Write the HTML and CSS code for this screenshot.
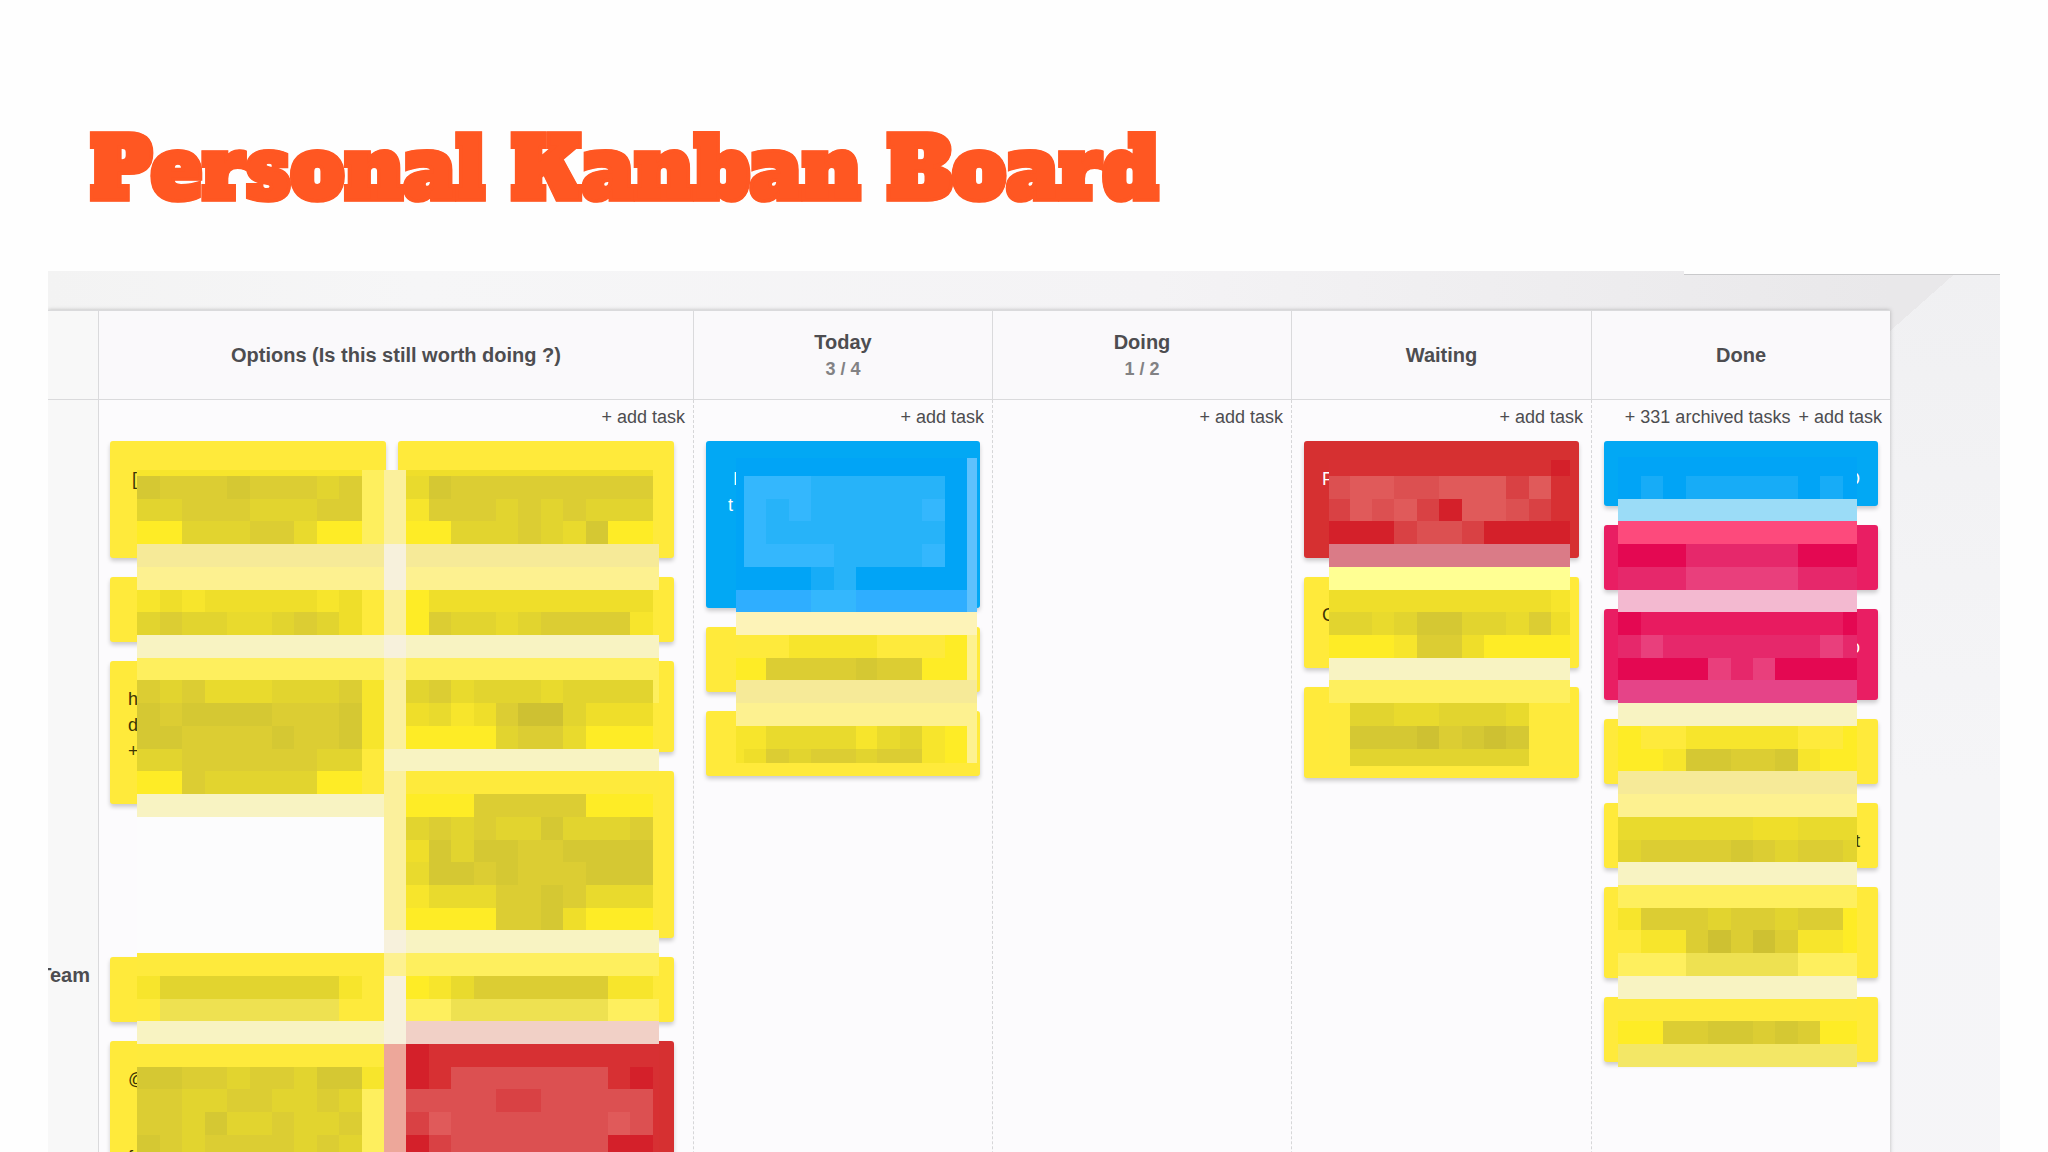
FILE: index.html
```html
<!DOCTYPE html>
<html lang="en">
<head>
<meta charset="utf-8">
<title>Personal Kanban Board</title>
<link rel="stylesheet" href="styles.css">
</head>
<body>
<div class="slide">
  <header class="slide-head"><h1>Personal Kanban Board</h1></header>
  <main class="panel">
    <div class="board">
      <div class="head lane-head"></div>
      <div class="head"><h2>Options (Is this still worth doing ?)</h2></div>
      <div class="head"><h2>Today</h2><p class="limit">3 / 4</p></div>
      <div class="head"><h2>Doing</h2><p class="limit">1 / 2</p></div>
      <div class="head"><h2>Waiting</h2></div>
      <div class="head"><h2>Done</h2></div>

      <div class="lane"><span>Team</span></div>

      <section class="column">
        <div class="actions"><button type="button">+ add task</button></div>
        <div class="stack pair">
          <article class="card lines-3 inset">[c</article>
          <article class="card lines-3"></article>
          <article class="card lines-1"></article>
          <article class="card lines-1"></article>
          <article class="card lines-4 tall">h<br>d<br>+</article>
          <article class="card lines-2"></article>
          <article class="card lines-5 end"><br><br>.</article>
          <article class="card lines-1"></article>
          <article class="card lines-1"></article>
          <article class="card lines-5">@<br><br><br>for</article>
          <article class="card lines-5 red"></article>
          <svg class="mosaic mosaic-options" data-map="options" aria-hidden="true"></svg>
        </div>
      </section>

      <section class="column">
        <div class="actions"><button type="button">+ add task</button></div>
        <div class="stack">
          <article class="card lines-5 blue inset">&nbsp;I<br>t</article>
          <article class="card lines-1"></article>
          <article class="card lines-1"></article>
          <svg class="mosaic mosaic-today" data-map="today" aria-hidden="true"></svg>
        </div>
      </section>

      <section class="column">
        <div class="actions"><button type="button">+ add task</button></div>
      </section>

      <section class="column">
        <div class="actions"><button type="button">+ add task</button></div>
        <div class="stack">
          <article class="card lines-3 red">F</article>
          <article class="card lines-2">C</article>
          <article class="card lines-2"></article>
          <svg class="mosaic mosaic-waiting" data-map="waiting" aria-hidden="true"></svg>
        </div>
      </section>

      <section class="column">
        <div class="actions"><button type="button">+ 331 archived tasks</button><button type="button">+ add task</button></div>
        <div class="stack">
          <article class="card lines-1 blue end">O</article>
          <article class="card lines-1 pink"></article>
          <article class="card lines-2 pink end">o</article>
          <article class="card lines-1"></article>
          <article class="card lines-1 end">t</article>
          <article class="card lines-2"></article>
          <article class="card lines-1"></article>
          <svg class="mosaic mosaic-done" data-map="done" aria-hidden="true"></svg>
        </div>
      </section>
    </div>
  </main>
</div>
<script src="mosaic.js"></script>
</body>
</html>
```
FILE: styles.css
```css
* { box-sizing: border-box; }

body {
  margin: 0;
  background: #fefefe;
  color: #4d4d50;
  font: 18px/26px "Helvetica Neue", "Liberation Sans", Arial, sans-serif;
}

h1, h2, p { margin: 0; }

.slide {
  height: 100vh;
  overflow: hidden;
}

.slide-head {
  height: 271px;
  padding: 114px 90px 0;
}

h1 {
  color: #ff5722;
  -webkit-text-stroke: 1px #ff5722;
  font: bold 85px/112px "Alfa Slab One", "DejaVu Serif Condensed", "DejaVu Serif", serif;
  white-space: nowrap;
}

.panel {
  position: relative;
  margin: 0 48px;
  padding: 39px 110px 0 0;
  overflow: hidden;
  background:
    linear-gradient(to bottom right, #e9e8ea 50%, transparent 50%) right 42px top 0 / 68px 60px no-repeat,
    linear-gradient(to right, #f3f3f3, #f6f6f7 20%, #f4f3f5 60%, #e9e8ea) left top / calc(100% - 110px) 60px no-repeat,
    linear-gradient(#f0f0f2, #f5f5f7 40%, #f6f5f8);
}

.panel::before {
  content: "";
  position: absolute;
  top: 0;
  right: 0;
  width: 316px;
  height: 3px;
  border-bottom: 1px solid #c9c9cb;
  background: #fefefe;
}

.board {
  display: grid;
  grid-template-columns: 50px 595fr 299fr 299fr 300fr 299fr;
  grid-template-rows: 90px 1150px;
  background: #fcfbfd;
  box-shadow: 0 0 4px #00000040;
}

.head {
  display: flex;
  flex-direction: column;
  align-items: center;
  justify-content: center;
  border: solid #dadadc;
  border-width: 1px 0 1px 1px;
  background: #faf9fb;
}

.lane-head, .lane { background: #f8f8f8; border-left: 0; }

h2 { font-size: 20px; line-height: 28px; }

.limit {
  color: #828284;
  font-weight: bold;
}

.lane {
  display: flex;
  align-items: center;
  justify-content: flex-end;
  padding-right: 8px;
  overflow: hidden;
  font-size: 20px;
  font-weight: bold;
}

.column { border-left: 1px dashed #d6d6d8; }
.lane + .column { border-left: 1px solid #dadadc; }

.actions {
  display: flex;
  justify-content: flex-end;
  gap: 8px;
  height: 41px;
  padding: 4px 8px 0;
}

button {
  height: 26px;
  padding: 0;
  border: 0;
  background: none;
  color: inherit;
  font: inherit;
}

.stack {
  position: relative;
  display: grid;
  row-gap: 19px;
  padding: 0 12px;
}

.pair {
  grid-template-columns: 1fr 1fr;
  column-gap: 12px;
  padding: 0 19px 0 11px;
}

.card {
  padding: 25px 14px 0 18px;
  overflow: hidden;
  border-radius: 3px;
  background: #ffea3b;
  box-shadow: 0 3px 4px #00000030;
  color: #3c3405;
}

.lines-1 { height: 65px; }
.lines-2 { height: 91px; }
.lines-3 { height: 117px; }
.lines-4 { height: 143px; }
.lines-5 { height: 167px; }
.tall { grid-row: span 2; }
.inset { padding-left: 22px; }
.end { text-align: right; }
.blue { background: #02a8f4; color: #fff; }
.red { background: #d63031; color: #fff; }
.pink { background: #e91e63; color: #fff; }
.lines-1.end, .lines-2.end { padding-right: 18px; }

.mosaic {
  position: absolute;
  shape-rendering: crispEdges;
}

.mosaic-options { top: 29px; left: 38px; width: calc(100% - 72px); height: 688px; }
.mosaic-today { top: 17px; left: 42px; width: calc(100% - 57px); height: 305px; }
.mosaic-waiting { top: 19px; left: 37px; width: calc(100% - 58px); height: 306px; }
.mosaic-done { top: 16px; left: 26px; width: calc(100% - 59px); height: 610px; }
```
FILE: mosaic.js
```js
// Tiles that hide the task texts: one letter per tile, one string per row.
const colours = {
  a: '#cec132', b: '#d5c833', c: '#dccd33', d: '#e2d42f', e: '#e9da2d', f: '#efde2a',
  g: '#f7e52c', h: '#feec26', i: '#feea3c', j: '#feef5e', k: '#fdf190', l: '#f6ea98',
  m: '#f8f3c2', n: '#f7f1dc', p: '#fbf09c', w: '#fcfcfd', y: '#fdf3b8', E: '#eee151',
  B: '#01a4f6', L: '#5ec1fd', M: '#27b3f9', N: '#34b7fd', O: '#17acf7', Q: '#2faeff', K: '#fdf0a0',
  P: '#f1d0c6', R: '#eda79a', S: '#d4202a', T: '#d73033', U: '#dc5051', V: '#d94144', X: '#e05a5a',
  G: '#da7b87', Y: '#ffff93', Z: '#9bdcf7', F: '#fd4a7c', D: '#e40852', H: '#e6286b',
  J: '#e93f7c', 1: '#f3b9d0', 2: '#e81b60', 3: '#e54488', 4: '#f3e766'
};

// top, left: size of the leading, cut-off tile row and column
const maps = {
  options: {
    width: 522, height: 688, top: 6, left: 23, rows: [
      'ggggggggggjpfffffffffffi',
      'bcccbcccdcjpebccccccccci',
      'ddcccdddccjpgcccdcdcdddi',
      'hhdddccehhjphhdddcdebhhi',
      'lllllllllllnllllllllllll',
      'kkkkkkkkkkknkkkkkkkkkkkk',
      'gfgfffffgfiphffffffffffi',
      'dcddeedcdfiphcddedccccgi',
      'mmmmmmmmmmmnmmmmmmmmmmmm',
      'jjjjjjjjjjjkjjjjjjjjjjjj',
      'cdceeedddcgpdcedddeddddj',
      'bcbbbbcccbgpfegfcaadfffi',
      'bbccccbccbgphhhhdccehhhi',
      'ddccccccddimmmmmmmmmmmmm',
      'hhcdddddhhipiiiiiiiiiiii',
      'mmmmmmmmmmmphhhccccchhhi',
      'wwwwwwwwwwwpdcdcddbdddci',
      'wwwwwwwwwwwpfbdbbccbbbbi',
      'wwwwwwwwwwwpebbcbcccbbbi',
      'wwwwwwwwwwwpgeeeccbceeei',
      'wwwwwwwwwwwphhhhccbfhhhi',
      'wwwwwwwwwwwnmmmmmmmmmmmm',
      'iiiiiiiiiiikjjjjjjjjjjjj',
      'gddddddddginhgeccccccggi',
      'iEEEEEEEEiinjjEEEEEEEjjj',
      'mmmmmmmmmmmnPPPPPPPPPPPP',
      'iiiiiiiiiiiRSTTTTTTTTTTT',
      'bbccdccdbbgRSTUUUUUUUTST',
      'ccddccddcdjRUUUUVVUUUUUT',
      'ccdbddcddcjRVXUUUUUUUXUT',
      'bcdccccdcdjRSVUUUUUUUSST'
    ]
  },
  today: {
    width: 242, height: 305, top: 18, left: 8, rows: [
      'BBBBBBBBBBBL', 'BNNNMMMMMMBL', 'BNMNMMMMMNBL', 'BNMMMMMMMMBL', 'BNNNNMMMMNBL',
      'BBBBOMBBBBBL', 'QQQQNNQQQQQL', 'yyyyyyyyyyyy', 'iiiggggiiihk', 'hhccccbcchhk',
      'llllllllllll', 'kkkkkkkkkkkk', 'ggeeeegedghk', 'gfcdccdccghk'
    ]
  },
  waiting: {
    width: 241, height: 306, top: 16, left: 20.5, rows: [
      'TTTTTTTTTTS', 'UXXUUXXXVXT', 'VXUXVSXXUVT', 'SSSVUUVSSSS', 'GGGGGGGGGGG', 'YYYYYYYYYYY',
      'ffffffffffg', 'ddedbbddecf', 'hhhgccfhhhh', 'mmmmmmmmmmm', 'jjjjjjjjjjj',
      'iddeedddeii', 'ibbbacbabii', 'iddddddddii'
    ]
  },
  done: {
    width: 239, height: 610, top: 19, left: 23, rows: [
      'BBBBBBBBBBB', 'BOBOOOOOBOB', 'ZZZZZZZZZZZ', 'FFFFFFFFFFF', 'DDDHHHHHDDD', 'HHHJJJJJHHH',
      '11111111111', 'D222222222D', 'HJHHHHHHHJH', 'DDDDJHJDDDD', '33333333333', 'mmmmmmmmmmm',
      'hiigggggiih', 'hhgbbccbghh', 'lllllllllll', 'kkkkkkkkkkk', 'eeeeeeffeee', 'dccccbcdccd',
      'mmmmmmmmmmm', 'jjjjjjjjjjj', 'gcccdccdcch', 'iggcacacggh', 'jjjEEEEEjjj', 'mmmmmmmmmmm',
      'iiiiiiiiiii', 'hhccbbcbchh', '44444444444'
    ]
  }
};

const stepX = 22.4;
const stepY = 22.72;

document.querySelectorAll('.mosaic').forEach(svg => {
  const map = maps[svg.dataset.map];
  svg.setAttribute('viewBox', `0 0 ${map.width} ${map.height}`);
  svg.setAttribute('preserveAspectRatio', 'none');
  const edge = (i, first, step, max) => Math.round(i === 0 ? 0 : Math.min(max, first + (i - 1) * step));
  map.rows.forEach((row, r) => {
    const y = edge(r, map.top, stepY, map.height);
    const bottom = edge(r + 1, map.top, stepY, map.height);
    [...row].forEach((key, c) => {
      const x = edge(c, map.left, stepX, map.width);
      const rect = document.createElementNS('http://www.w3.org/2000/svg', 'rect');
      rect.setAttribute('x', x);
      rect.setAttribute('y', y);
      rect.setAttribute('width', edge(c + 1, map.left, stepX, map.width) - x);
      rect.setAttribute('height', bottom - y);
      rect.setAttribute('fill', colours[key]);
      svg.append(rect);
    });
  });
});
```
